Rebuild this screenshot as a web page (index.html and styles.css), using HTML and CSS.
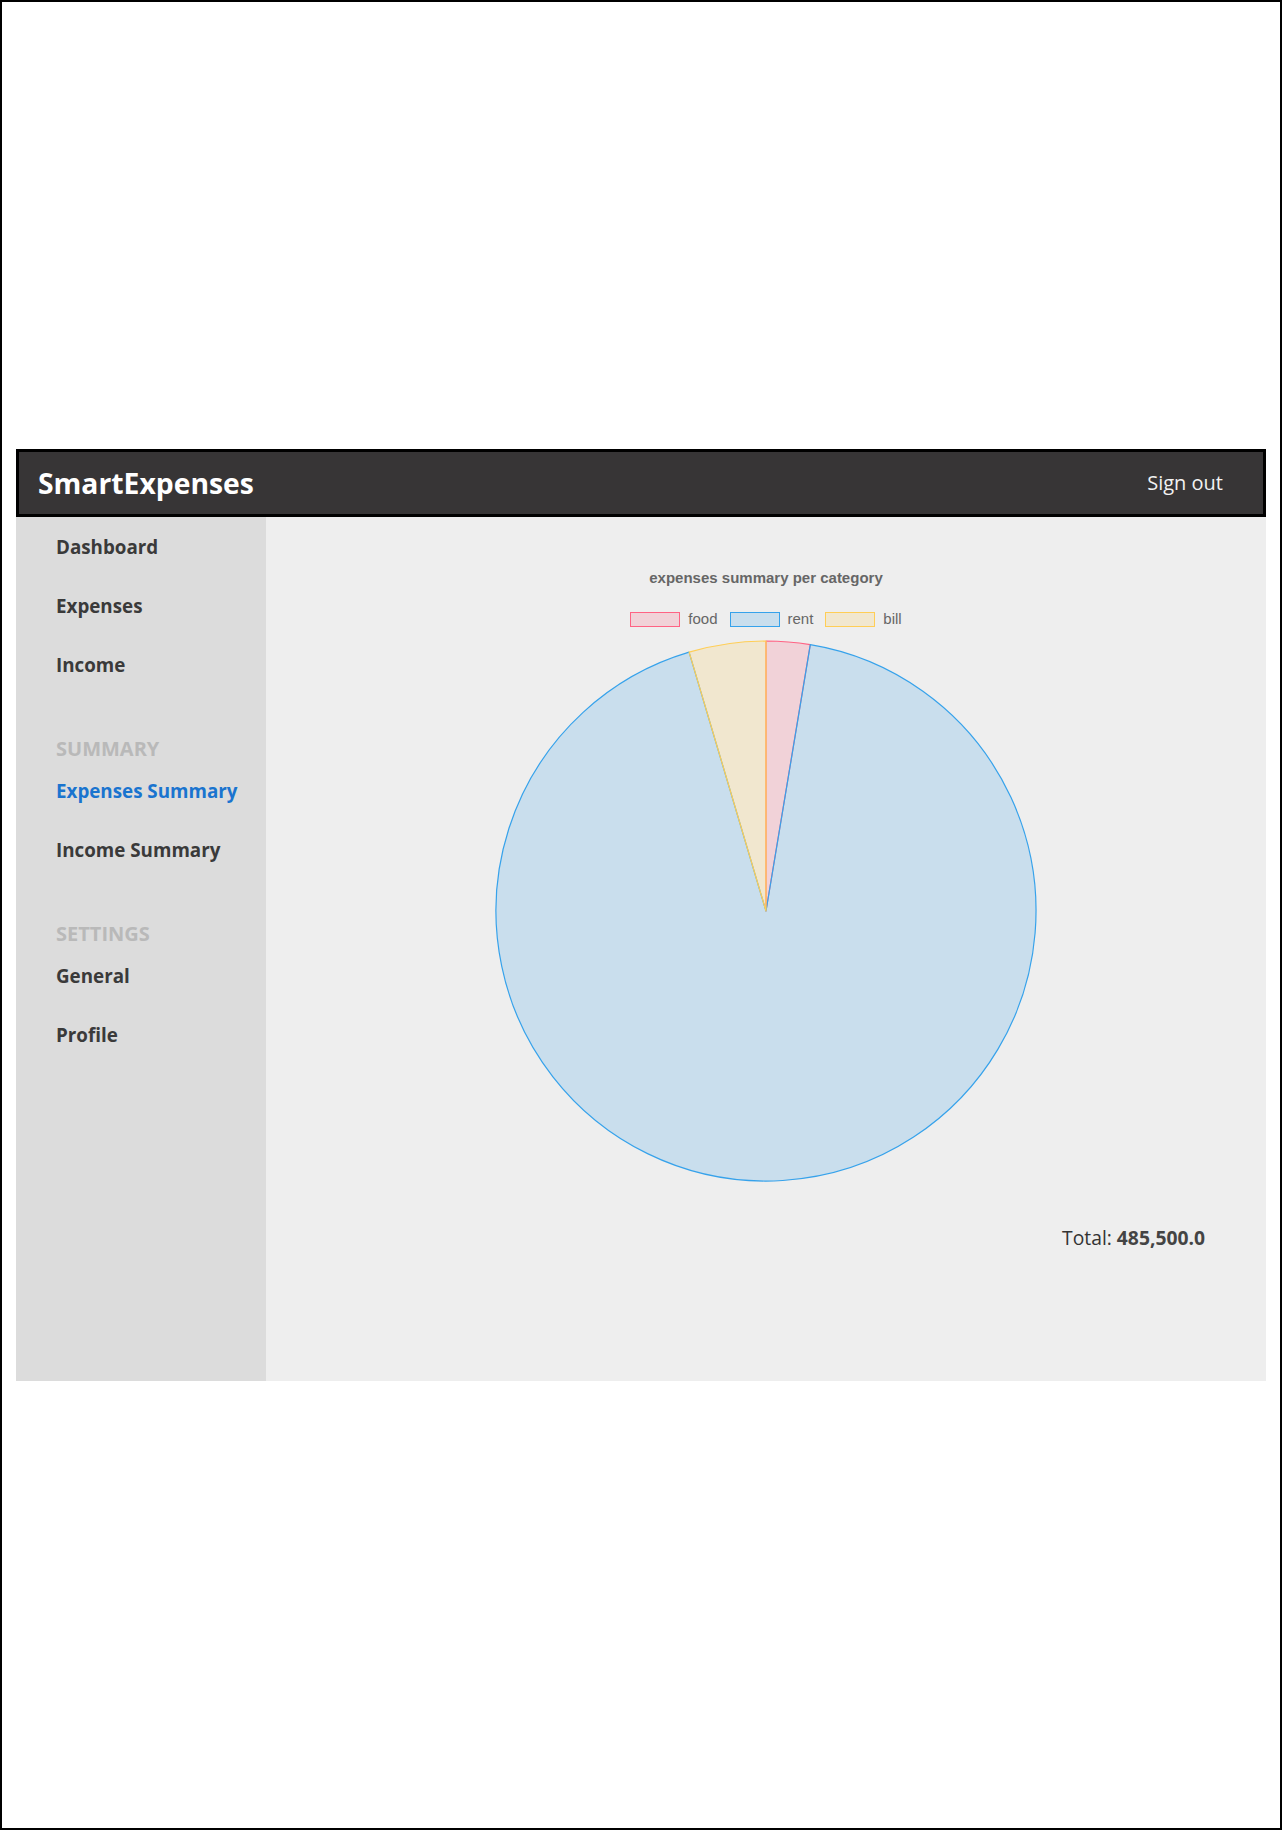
FILE: index.html
```html
<!DOCTYPE html>
<html lang="en">
<head>
<meta charset="utf-8">
<title>SmartExpenses</title>
<link rel="stylesheet" href="styles.css">
</head>
<body>
<div class="page">
  <div class="app">
    <header class="topbar">
      <div class="brand">SmartExpenses</div>
      <a class="signout" href="#">Sign out</a>
    </header>
    <div class="body">
      <nav class="sidebar">
        <a class="nav-item" href="#">Dashboard</a>
        <a class="nav-item" href="#">Expenses</a>
        <a class="nav-item" href="#">Income</a>
        <div class="nav-heading">SUMMARY</div>
        <a class="nav-item active" href="#">Expenses Summary</a>
        <a class="nav-item" href="#">Income Summary</a>
        <div class="nav-heading">SETTINGS</div>
        <a class="nav-item" href="#">General</a>
        <a class="nav-item" href="#">Profile</a>
      </nav>
      <main class="content">
        <div class="chart-title">expenses summary per category</div>
        <div class="legend">
          <div class="legend-item"><span class="swatch swatch-food"></span><span class="legend-label">food</span></div>
          <div class="legend-item"><span class="swatch swatch-rent"></span><span class="legend-label">rent</span></div>
          <div class="legend-item"><span class="swatch swatch-bill"></span><span class="legend-label">bill</span></div>
        </div>
        <svg class="pie" width="542" height="542" viewBox="0 0 542 542">
          <path class="slice-food" d="M271,271 L271,1 A270,270 0 0 1 315.29,4.66 Z"/>
          <path class="slice-rent" d="M271,271 L315.29,4.66 A270,270 0 1 1 194.09,12.19 Z"/>
          <path class="slice-bill" d="M271,271 L194.09,12.19 A270,270 0 0 1 271,1 Z"/>
        </svg>
        <div class="total">Total: <b>485,500.0</b></div>
      </main>
    </div>
  </div>
</div>
</body>
</html>
```

FILE: styles.css
```css
html, body {
  margin: 0;
  padding: 0;
  background: #ffffff;
}

.page {
  box-sizing: border-box;
  width: 1282px;
  height: 1830px;
  border: 2px solid #000;
  display: flex;
  align-items: center;
  justify-content: center;
  font-family: "Open Sans", "Noto Sans", sans-serif;
}

.app {
  width: 1250px;
  height: 932px;
  display: flex;
  flex-direction: column;
}

.topbar {
  box-sizing: border-box;
  height: 68px;
  flex: none;
  border: 3px solid #000;
  background: #373536;
  display: flex;
  align-items: center;
  justify-content: space-between;
  padding: 0 40px 0 19px;
}

.brand {
  color: #ffffff;
  font-weight: 700;
  font-size: 28.3px;
  line-height: 36px;
}

.signout {
  color: #f2f2f2;
  font-size: 20px;
  line-height: 28px;
  text-decoration: none;
}

.body {
  flex: 1;
  display: flex;
  min-height: 0;
}

.sidebar {
  width: 250px;
  flex: none;
  background: #dcdcdc;
  padding-top: 1px;
  display: flex;
  flex-direction: column;
}

.nav-item {
  display: block;
  height: 59px;
  line-height: 59px;
  padding-left: 40px;
  font-size: 18.8px;
  font-weight: 700;
  color: #3a3a3a;
  text-decoration: none;
  white-space: nowrap;
}

.nav-item.active {
  color: #1a74cf;
}

.nav-heading {
  margin-top: 40px;
  height: 27px;
  line-height: 27px;
  padding-left: 40px;
  font-size: 20px;
  font-weight: 700;
  color: #b9b9b9;
}

.content {
  flex: 1;
  background: #eeeeee;
  display: flex;
  flex-direction: column;
  align-items: center;
  padding-top: 52px;
}

.chart-title {
  font-family: "Liberation Sans", Arial, sans-serif;
  font-weight: 700;
  font-size: 15px;
  line-height: 18px;
  color: #666666;
}

.legend {
  margin-top: 24px;
  display: flex;
  gap: 12px;
  height: 16px;
  align-items: center;
}

.legend-item {
  display: flex;
  align-items: center;
  gap: 8px;
}

.swatch {
  box-sizing: border-box;
  width: 50px;
  height: 15px;
  border: 1px solid;
}

.swatch-food {
  background: rgba(255, 99, 132, 0.2);
  border-color: rgb(255, 99, 132);
}

.swatch-rent {
  background: rgba(54, 162, 235, 0.2);
  border-color: rgb(54, 162, 235);
}

.swatch-bill {
  background: rgba(255, 206, 86, 0.2);
  border-color: rgb(255, 206, 86);
}

.legend-label {
  font-family: "Liberation Sans", Arial, sans-serif;
  font-size: 15px;
  line-height: 16px;
  color: #666666;
}

.pie {
  margin-top: 13px;
  display: block;
  flex: none;
}

.pie path {
  stroke-width: 1.2;
  stroke-linejoin: round;
}

.slice-food {
  fill: rgba(255, 99, 132, 0.2);
  stroke: rgb(255, 99, 132);
}

.slice-rent {
  fill: rgba(54, 162, 235, 0.2);
  stroke: rgb(54, 162, 235);
}

.slice-bill {
  fill: rgba(255, 206, 86, 0.2);
  stroke: rgb(255, 206, 86);
}

.total {
  align-self: stretch;
  text-align: right;
  padding-right: 61px;
  margin-top: 43px;
  font-size: 19.3px;
  line-height: 26px;
  color: #333333;
}

.total b {
  font-weight: 700;
  color: #444444;
}
```
